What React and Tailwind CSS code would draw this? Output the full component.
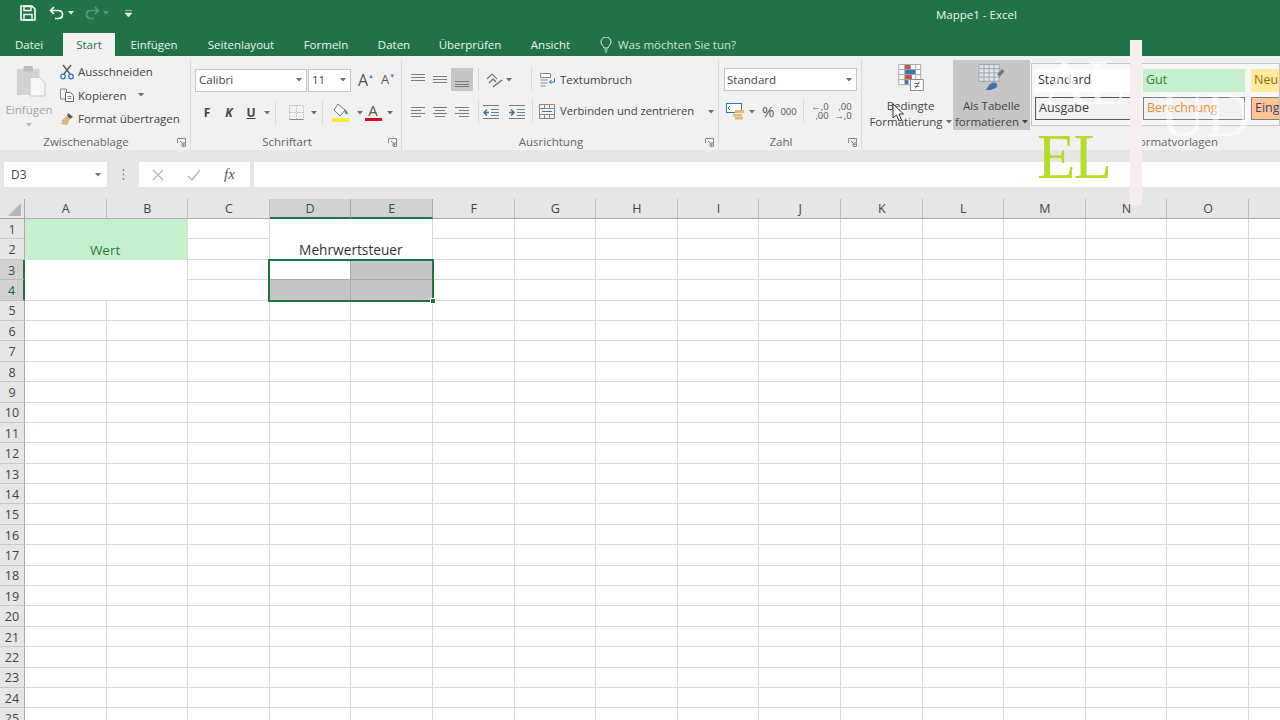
import { Fragment } from "react";

const ui = { fontFamily: '"Open Sans", "Noto Sans", sans-serif' };

const colHeads = ["A", "B", "C", "D", "E", "F", "G", "H", "I", "J", "K", "L", "M", "N", "O", ""];
const rowNums = Array.from({ length: 25 }, (_, i) => i + 1);

function Chev({ className = "", color = "#707070" }) {
  return (
    <svg width="6" height="4" viewBox="0 0 6 4" className={`shrink-0 ${className}`}>
      <path d="M0 0h6L3 3.500z" fill={color} />
    </svg>
  );
}

function Lines({ rows }) {
  // rows: [x1, x2, y] in a 16x16 box
  return (
    <svg width="16" height="16" viewBox="0 0 16 16" className="shrink-0">
      {rows.map(([a, b, y], i) => (
        <path key={i} d={`M${a} ${y}H${b}`} stroke="#7c7c7c" strokeWidth="1" />
      ))}
    </svg>
  );
}

function IconBtn({ children, className = "" }) {
  return <div className={`flex h-[23px] w-[22px] shrink-0 items-center justify-center ${className}`}>{children}</div>;
}

function Sep() {
  return <div className="mx-[5px] h-[23px] w-px shrink-0 bg-[#dadada]" />;
}

function Launcher() {
  return (
    <svg width="9" height="9" viewBox="0 0 9 9" className="shrink-0">
      <path d="M.5 5V.5H8.5V8.5H5" fill="none" stroke="#8a8a8a" />
      <path d="M3 3l4 4M7 4v3H4" fill="none" stroke="#5f7f9f" />
    </svg>
  );
}

function Group({ width, label, children }) {
  return (
    <div className={`mt-[4px] flex shrink-0 flex-col border-r border-[#d9d9d9] ${width}`}>
      <div className="flex-1">{children}</div>
      <div className="relative flex h-[16px] items-center justify-center pr-[18px] text-[11.5px] text-[#666]">
        {label}
        <span className="absolute right-[4px] top-[4px]">
          <Launcher />
        </span>
      </div>
    </div>
  );
}

function Clipboard() {
  return (
    <Group width="w-[191px]" label="Zwischenablage">
      <div className="flex">
        <div className="flex w-[58px] flex-col items-center pt-[3px]">
          <svg width="30" height="35" viewBox="0 0 32 35" className="ml-[3px]">
            <rect x="1" y="5" width="24" height="28" fill="#d2d2d2" />
            <rect x="8" y="2" width="10" height="6" rx="1" fill="#bdbdbd" />
            <path d="M15 14h10l6 6v14H15z" fill="#f7f7f7" stroke="#c4c4c4" />
          </svg>
          <span className="mt-[3px] text-[11.5px] leading-[17px] text-[#a3a3a3]">Einfügen</span>
          <Chev className="mt-[5px]" color="#b5b5b5" />
        </div>
        <div className="flex flex-col pl-[1px] text-[11.5px] text-[#444]">
          <div className="flex h-[23.5px] items-center gap-[3px]">
            <svg width="16" height="16" viewBox="0 0 16 16">
              <path d="M4 1l7 9M12 1L5 10" stroke="#555" strokeWidth="1.3" fill="none" />
              <circle cx="4" cy="12.5" r="2.3" fill="none" stroke="#2f75b5" strokeWidth="1.3" />
              <circle cx="12" cy="12.5" r="2.3" fill="none" stroke="#2f75b5" strokeWidth="1.3" />
            </svg>
            Ausschneiden
          </div>
          <div className="flex h-[23.5px] items-center gap-[3px]">
            <svg width="16" height="16" viewBox="0 0 16 16">
              <path d="M1.5 2h6v10h-6z" fill="#f4f4f4" stroke="#888" />
              <path d="M6.5 5.5h5l3 3v6h-8z" fill="#fff" stroke="#666" />
              <path d="M8.500 9.500h4M8.500 11.500h4" stroke="#888" />
            </svg>
            Kopieren
            <Chev className="ml-[8px]" />
          </div>
          <div className="flex h-[23.5px] items-center gap-[3px]">
            <svg width="16" height="16" viewBox="0 0 16 16">
              <path d="M9 2l5 4-3 2-3-3z" fill="#555" />
              <path d="M8 5l3 3-3 6-7-1 3-2-2-1z" fill="#e2b56c" />
            </svg>
            Format übertragen
          </div>
        </div>
      </div>
    </Group>
  );
}

function Font() {
  return (
    <Group width="w-[211px]" label="Schriftart">
      <div className="flex items-center pl-[4px] pt-[8px]">
        <div className="flex h-[23px] w-[112px] items-center justify-between border border-[#c6c6c6] bg-white pl-[3px] pr-[4px] text-[11.5px] text-[#444]">
          Calibri
          <Chev />
        </div>
        <div className="ml-[1px] flex h-[23px] w-[43px] items-center justify-between border border-[#c6c6c6] bg-white pl-[3px] pr-[4px] text-[11.5px] text-[#444]">
          11
          <Chev />
        </div>
        <div className="ml-[4px] flex w-[22px] items-center justify-center text-[16px] text-[#555]">
          A<span className="-mt-[8px] text-[6px] text-[#4a86c5]">▲</span>
        </div>
        <div className="flex w-[22px] items-center justify-center text-[13px] text-[#555]">
          A<span className="-mt-[8px] text-[6px] text-[#4a86c5]">▼</span>
        </div>
      </div>
      <div className="mt-[9px] flex h-[23px] items-center pl-[5px] text-[12px] text-[#444]">
        <IconBtn className="font-bold">F</IconBtn>
        <IconBtn className="font-bold italic">K</IconBtn>
        <IconBtn className="font-bold underline">U</IconBtn>
        <Chev className="ml-[2px]" />
        <Sep />
        <div className="flex w-[30px] items-center justify-center">
          <svg width="15" height="15" viewBox="0 0 15 15">
            <path d="M.5.5h14v14H.5zM7.500.5v14M.5 7.500h14" fill="none" stroke="#bbb" strokeDasharray="1.500 1" />
            <path d="M.5 14.500h14" stroke="#888" />
          </svg>
        </div>
        <Chev />
        <Sep />
        <div className="flex w-[28px] items-center justify-start pl-[3px]">
          <svg width="19" height="19" viewBox="0 0 19 19">
            <path d="M7 1l7 6-5 6-6-6z" fill="#fff" stroke="#777" />
            <path d="M13 6c3 1 4 4 4 5-2 1-4-1-4-5z" fill="#5b84b1" />
            <rect x="1" y="15" width="17" height="4" fill="#f3ee3a" />
          </svg>
        </div>
        <Chev className="ml-[1px]" />
        <div className="flex w-[20px] flex-col items-center text-[15px] leading-[12px] text-[#555]">
          A
          <div className="mt-[2px] h-[3px] w-[17px] bg-[#d40b1a]" />
        </div>
        <Chev className="ml-[4px]" />
      </div>
    </Group>
  );
}

function Alignment() {
  return (
    <Group width="w-[317px]" label="Ausrichtung">
      <div className="mt-[8px] flex h-[23px] items-center pl-[5px]">
        <IconBtn><Lines rows={[[1, 15, 2.5], [1, 15, 5.5], [1, 15, 8.5]]} /></IconBtn>
        <IconBtn><Lines rows={[[1, 15, 4.5], [1, 15, 7.5], [1, 15, 10.5]]} /></IconBtn>
        <IconBtn className="bg-[#c6c6c6]"><Lines rows={[[1, 15, 9.5], [1, 15, 12.5], [1, 15, 14.5]]} /></IconBtn>
        <Sep />
        <div className="flex w-[20px] justify-center">
          <svg width="18" height="16" viewBox="0 0 18 16">
            <path d="M2 7l5-5 5 5" fill="none" stroke="#777" strokeWidth="1.2" />
            <path d="M4 11l4-4 3 3M8 15L17 8" fill="none" stroke="#666" strokeWidth="1.2" />
          </svg>
        </div>
        <Chev className="ml-[2px]" />
        <div className="ml-[19px] mr-[7px] h-[23px] w-px bg-[#dadada]" />
        <div className="flex items-center gap-[4px] whitespace-nowrap text-[11.5px] text-[#444]">
          <svg width="17" height="16" viewBox="0 0 17 16">
            <path d="M1.500 1.500h10v4h-10z" fill="#fff" stroke="#888" />
            <path d="M1.500 8h7M1.500 11h7M1.500 14h5" stroke="#888" />
            <path d="M15.500 6v4h-5m2-2l-2 2 2 2" fill="none" stroke="#2f75b5" />
          </svg>
          Textumbruch
        </div>
      </div>
      <div className="mt-[9px] flex h-[23px] items-center pl-[5px]">
        <IconBtn><Lines rows={[[1, 15, 3.5], [1, 11, 6.5], [1, 15, 9.5], [1, 11, 12.5]]} /></IconBtn>
        <IconBtn><Lines rows={[[1, 15, 3.5], [3, 13, 6.5], [1, 15, 9.5], [3, 13, 12.5]]} /></IconBtn>
        <IconBtn><Lines rows={[[1, 15, 3.5], [5, 15, 6.5], [1, 15, 9.5], [5, 15, 12.5]]} /></IconBtn>
        <Sep />
        <div className="-ml-[2px] flex w-[44px] shrink-0 justify-between">
          <svg width="18" height="16" viewBox="0 0 18 16">
            <path d="M1 1.500h16M9 5.500h8M9 8.500h8M9 11.500h8M1 14.500h16" stroke="#7c7c7c" />
            <path d="M7 8.500H2m3-3l-3 3 3 3" fill="none" stroke="#2f75b5" strokeWidth="1.500" />
          </svg>
          <svg width="18" height="16" viewBox="0 0 18 16">
            <path d="M1 1.500h16M9 5.500h8M9 8.500h8M9 11.500h8M1 14.500h16" stroke="#7c7c7c" />
            <path d="M1 8.500h5m-3-3l3 3-3 3" fill="none" stroke="#2f75b5" strokeWidth="1.500" />
          </svg>
        </div>
        <div className="mx-[6px] h-[23px] w-px bg-[#dadada]" />
        <div className="flex items-center gap-[4px] whitespace-nowrap text-[11.2px] text-[#444]">
          <svg width="17" height="17" viewBox="0 0 17 17">
            <path d="M.5 1.500h15v14H.5zM.5 5.500h15M.5 11.500h15M5.500 1.500v4M10.500 1.500v4M5.500 11.500v4M10.500 11.500v4" fill="none" stroke="#888" />
            <path d="M3 8.500h10" stroke="#2f75b5" />
          </svg>
          Verbinden und zentrieren
          <Chev className="ml-[10px]" />
        </div>
      </div>
    </Group>
  );
}

function NumberGroup() {
  return (
    <Group width="w-[143px]" label="Zahl">
      <div className="ml-[5px] mt-[8px] flex h-[23px] w-[133px] items-center justify-between border border-[#c6c6c6] bg-white pl-[2px] pr-[4px] text-[11.5px] text-[#444]">
        Standard
        <Chev />
      </div>
      <div className="mt-[9px] flex h-[23px] items-center pl-[7px] text-[#555]">
        <svg width="19" height="17" viewBox="0 0 19 17">
          <rect x=".5" y=".5" width="15" height="9" fill="#fff" stroke="#2f75b5" />
          <path d="M4 3l-2 2 2 2" stroke="#2f75b5" fill="none" />
          <rect x="9" y="7" width="9" height="3" fill="#e9b76a" />
          <rect x="7" y="11" width="9" height="2.500" fill="#e9b76a" />
          <rect x="9" y="14" width="8" height="2.500" fill="#e9b76a" />
        </svg>
        <Chev className="ml-[4px]" />
        <span className="ml-[7px] text-[15px] leading-none">%</span>
        <span className="ml-[6px] text-[9.5px] leading-none">000</span>
        <div className="ml-[6px] mr-[5px] h-[23px] w-px bg-[#dadada]" />
        <div className="flex w-[20px] flex-col text-[9.5px] leading-[8.5px]">
          <span className="text-right"><span className="text-[#2f75b5]">←</span>,0</span>
          <span className="text-right">,00</span>
        </div>
        <div className="ml-[3px] flex w-[20px] flex-col text-[9.5px] leading-[8.5px]">
          <span className="text-right">,00</span>
          <span className="text-right"><span className="text-[#2f75b5]">→</span>,0</span>
        </div>
      </div>
    </Group>
  );
}

function Styles() {
  const cell = "flex h-[23px] items-center pl-[3px] text-[12.5px] shrink-0";
  return (
    <div className="mt-[4px] flex min-w-0 flex-1 flex-col">
      <div className="flex flex-1 pl-[6px]">
        <div className="flex h-[70px] w-[85px] shrink-0 flex-col items-center text-[11.5px] leading-[16px] text-[#444]">
          <svg width="32" height="34" viewBox="0 0 30 32" className="mb-[7px] mt-[4px]">
            <path d="M.5.5h26v24H.5zM.5 6.500h26M.5 12.500h26M.5 18.500h26M7.500.5v24M14.500.5v24M20.500.5v24" fill="#fff" stroke="#9a9a9a" />
            <rect x="8" y="1" width="6" height="5" fill="#c8553d" />
            <rect x="8" y="7" width="12" height="5" fill="#3a72b5" />
            <rect x="8" y="13" width="8" height="5" fill="#c8553d" />
            <rect x="8" y="19" width="4" height="5" fill="#3a72b5" />
            <rect x="14.500" y="18.500" width="15" height="13" fill="#fff" stroke="#777" />
            <path d="M19 23h6M19 26.500h6M25 21l-5 8" stroke="#555" fill="none" />
          </svg>
          Bedingte
          <span className="flex items-center gap-[3px]">Formatierung<Chev /></span>
        </div>
        <div className="flex h-[70px] w-[77px] shrink-0 flex-col items-center bg-[#c6c6c6] text-[11.5px] leading-[16px] text-[#444]">
          <svg width="34" height="34" viewBox="0 0 32 32" className="mb-[7px] mt-[4px]">
            <path d="M.5.5h24v20H.5zM.5 5.500h24M.5 10.500h24M.5 15.500h24M6.500.5v20M12.500.5v20M18.500.5v20" fill="#dde4ee" stroke="#9a9a9a" />
            <path d="M22 12l6-6 3 3-6 6z" fill="#777" />
            <path d="M8 31c3-1 3-7 9-9 4-1 6 2 5 5-4 4-10 4-14 4z" fill="#3a72b5" />
          </svg>
          Als Tabelle
          <span className="flex items-center gap-[3px]">formatieren<Chev color="#444" /></span>
        </div>
        <div className="ml-[1px] mt-[3px] h-[63px] w-[300px] overflow-hidden border border-[#c6c6c6] bg-[#f7f7f7] py-[5px] pl-[3px]">
          <div className="flex gap-[6px]">
            <div className={`${cell} w-[102px] bg-white text-[#333]`}>Standard</div>
            <div className={`${cell} w-[102px] bg-[#c6efce] text-[#2f7d32]`}>Gut</div>
            <div className={`${cell} w-[60px] bg-[#ffeb9c] text-[#9c6500]`}>Neu</div>
          </div>
          <div className="mt-[5px] flex gap-[6px]">
            <div className={`${cell} w-[102px] border border-[#555] bg-[#f2f2f2] text-[#3f3f3f]`}>Ausgabe</div>
            <div className={`${cell} w-[102px] border border-[#7f7f7f] bg-[#f2f2f2] font-medium text-[#ef8a2a]`}>Berechnung</div>
            <div className={`${cell} w-[60px] border border-[#7f7f7f] bg-[#ffc694] text-[#3f3f76]`}>Eingabe</div>
          </div>
        </div>
      </div>
      <div className="flex h-[16px] items-center justify-end pr-[62px] text-[11.5px] text-[#666]">Formatvorlagen</div>
    </div>
  );
}

function Sheet() {
  const headCls = "flex items-center justify-center border-r border-[#bdbdbd] border-b border-b-[#a9a9a9] pl-[1px] pt-[2px] text-[12.5px] text-[#444]";
  const cellCls = "border-r border-b border-[#d8d8d8]";
  const rowHead = (n) => (
    <div
      key={`r${n}`}
      className={`flex items-center justify-center border-b pt-[3px] text-[12.5px] ${
        n === 3 || n === 4
          ? "border-r-2 border-b-[#bdbdbd] border-r-[#217346] bg-[#d2d2d2] text-[#225f3c]"
          : "border-r border-b-[#c8c8c8] border-r-[#a9a9a9] bg-[#e6e6e6] text-[#444]"
      }`}
    >
      {n}
    </div>
  );

  return (
    <div
      className="grid grid-cols-[25px_repeat(16,81.6px)] grid-rows-[20px_repeat(25,20.4px)] bg-white"
      style={{ fontFamily: '"Open Sans", sans-serif' }}
    >
      <div className="flex items-end justify-end border-r border-b border-[#a9a9a9] bg-[#e6e6e6] p-[2px] pr-[3px]">
        <svg width="13" height="13" viewBox="0 0 13 13">
          <path d="M13 0v13H0z" fill="#b5b5b5" />
        </svg>
      </div>
      {colHeads.map((c) =>
        c === "D" || c === "E" ? (
          <div key={c} className="flex items-center justify-center border-r border-b-2 border-r-[#a9a9a9] border-b-[#217346] bg-[#d2d2d2] pt-[2px] text-[12.5px] text-[#225f3c]">
            {c}
          </div>
        ) : (
          <div key={c || "p"} className={`${headCls} bg-[#e6e6e6]`}>
            {c}
          </div>
        )
      )}
      {rowNums.map((n) => (
        <Fragment key={n}>
          {rowHead(n)}
          {n === 1 && (
            <div className="col-span-2 row-span-2 flex items-end justify-center bg-[#c6efce] pr-[3px] text-[13.5px] leading-[20px] text-[#2a7a37]">
              Wert
            </div>
          )}
          {n === 3 && <div className={`col-span-2 row-span-2 ${cellCls}`} />}
          {n > 4 && <div className={cellCls} />}
          {n > 4 && <div className={cellCls} />}
          <div className={cellCls} />
          {n === 1 && (
            <div className={`col-span-2 row-span-2 flex items-end justify-center text-[13.7px] leading-[19px] text-[#333] ${cellCls}`}>
              Mehrwertsteuer
            </div>
          )}
          {n === 3 && (
            <div className="relative col-span-2 row-span-2 -mb-[1px] -ml-[2px] -mr-[1px] -mt-[1px] grid grid-cols-2 grid-rows-2 border-2 border-[#217346]">
              <div className="border-r border-b border-[#a9a9a9] bg-white" />
              <div className="border-b border-[#a9a9a9] bg-[#c6c6c6]" />
              <div className="border-r border-[#a9a9a9] bg-[#c6c6c6]" />
              <div className="bg-[#c6c6c6]" />
              <div className="absolute -bottom-[4px] -right-[4px] h-[6px] w-[6px] border border-white bg-[#217346]" />
            </div>
          )}
          {n > 4 && <div className={cellCls} />}
          {n > 4 && <div className={cellCls} />}
          {colHeads.slice(5).map((c, i) => (
            <div key={i} className={cellCls} />
          ))}
        </Fragment>
      ))}
    </div>
  );
}

export default function App() {
  return (
    <div className="relative h-[720px] w-[1280px] overflow-hidden bg-white" style={ui}>
      {/* title bar */}
      <div className="flex h-[33px] items-center bg-[#217346] pb-[8px] pl-[20px] text-[11.5px] text-[#eef5f0]">
        <svg width="16" height="16" viewBox="0 0 16 16">
          <path d="M1 1h11l3 3v11H1z" fill="none" stroke="#fff" strokeWidth="1.6" />
          <path d="M4 1.500h7v4H4zM4 9.500h8V15H4z" fill="none" stroke="#fff" strokeWidth="1.4" />
        </svg>
        <svg width="16" height="14" viewBox="0 0 16 14" className="ml-[13px]">
          <path d="M5 1L1.500 4.500 5 8M2 4.500h7c6 0 6 8 0 8H6" fill="none" stroke="#fff" strokeWidth="1.7" />
        </svg>
        <Chev className="ml-[3px]" color="#e8f1eb" />
        <svg width="16" height="14" viewBox="0 0 16 14" className="ml-[10px]">
          <path d="M11 1l3.500 3.500L11 8M14 4.500H7c-6 0-6 8 0 8h3" fill="none" stroke="#5e9a79" strokeWidth="1.7" />
        </svg>
        <Chev className="ml-[3px]" color="#5e9a79" />
        <svg width="7" height="8" viewBox="0 0 7 8" className="ml-[16px]">
          <path d="M0 1.500h7M0 4h7l-3.500 4z" fill="#e8f1eb" stroke="#e8f1eb" strokeWidth=".6" />
        </svg>
        <span className="ml-[804px] mt-[4px]">Mappe1 - Excel</span>
      </div>

      {/* tabs */}
      <div className="flex h-[23px] items-center bg-[#217346] text-[11.5px] text-[#e9f3ed]">
        <div className="mr-[5px] w-[58px] text-center">Datei</div>
        <div className="flex h-[24px] w-[52px] items-center justify-center self-start bg-[#f1f1f1] text-[#217346]">Start</div>
        <div className="w-[78px] text-center">Einfügen</div>
        <div className="w-[96px] text-center">Seitenlayout</div>
        <div className="w-[74px] text-center">Formeln</div>
        <div className="w-[62px] text-center">Daten</div>
        <div className="w-[90px] text-center">Überprüfen</div>
        <div className="w-[71px] text-center">Ansicht</div>
        <svg width="12" height="16" viewBox="0 0 12 16" className="ml-[14px]">
          <path d="M4 11c0-2-3-3-3-6a5 5 0 0 1 10 0c0 3-3 4-3 6zM4.500 13h3M5 15h2" fill="none" stroke="#e9f3ed" />
        </svg>
        <span className="ml-[6px] text-[#cfe3d7]">Was möchten Sie tun?</span>
      </div>

      {/* ribbon */}
      <div className="flex h-[94px] bg-[#f1f1f1] text-[#444]">
        <Clipboard />
        <Font />
        <Alignment />
        <NumberGroup />
        <Styles />
      </div>

      {/* formula bar */}
      <div className="flex h-[49px] items-start bg-[#e6e6e6] pl-[4px] pt-[12px] text-[12px] text-[#444]">
        <div className="flex h-[25px] w-[103px] items-center justify-between bg-white pl-[7px] pr-[6px]">
          D3
          <Chev />
        </div>
        <div className="flex h-[25px] w-[32px] items-center justify-center text-[#8f8f8f]">
          <svg width="3" height="11" viewBox="0 0 3 11">
            <path d="M1.500 0v2M1.500 4.500v2M1.500 9v2" stroke="#8f8f8f" strokeWidth="1.500" />
          </svg>
        </div>
        <div className="flex h-[25px] w-[111px] items-center bg-white">
          <svg width="12" height="12" viewBox="0 0 12 12" className="ml-[13px]">
            <path d="M1 1l10 10M11 1L1 11" stroke="#b8b8b8" strokeWidth="1.400" />
          </svg>
          <svg width="14" height="12" viewBox="0 0 14 12" className="ml-[23px]">
            <path d="M1 7l4 4 8-10" fill="none" stroke="#b8b8b8" strokeWidth="1.400" />
          </svg>
          <span className="ml-[23px] font-['Liberation_Serif',serif] text-[15px] italic text-[#555]">fx</span>
        </div>
        <div className="ml-[4px] h-[25px] flex-1 bg-white" />
      </div>

      <Sheet />

      {/* transition overlay from the video */}
      <div className="absolute left-[1037px] top-[120px] font-['Liberation_Serif',serif] text-[63px] leading-[75px] tracking-[-2px] text-[#b6dc2b]">
        EL
      </div>
      <div className="absolute left-[1130px] top-[40px] h-[165px] w-[12px] bg-[#f7efee]" />
      <div className="absolute left-[1042px] top-[46px] font-['Liberation_Serif',serif] text-[63px] leading-[75px] text-white/70">
        AL
      </div>
      <div className="absolute left-[1160px] top-[78px] font-['Liberation_Serif',serif] text-[63px] leading-[75px] text-white/50">
        UD
      </div>

      {/* mouse pointer */}
      <svg width="13" height="19" viewBox="0 0 13 19" className="absolute left-[892px] top-[103px]">
        <path d="M1 1v14l3.500-3 2.500 6 2.500-1-2.500-6h4.500z" fill="#fff" stroke="#333" />
      </svg>
    </div>
  );
}
